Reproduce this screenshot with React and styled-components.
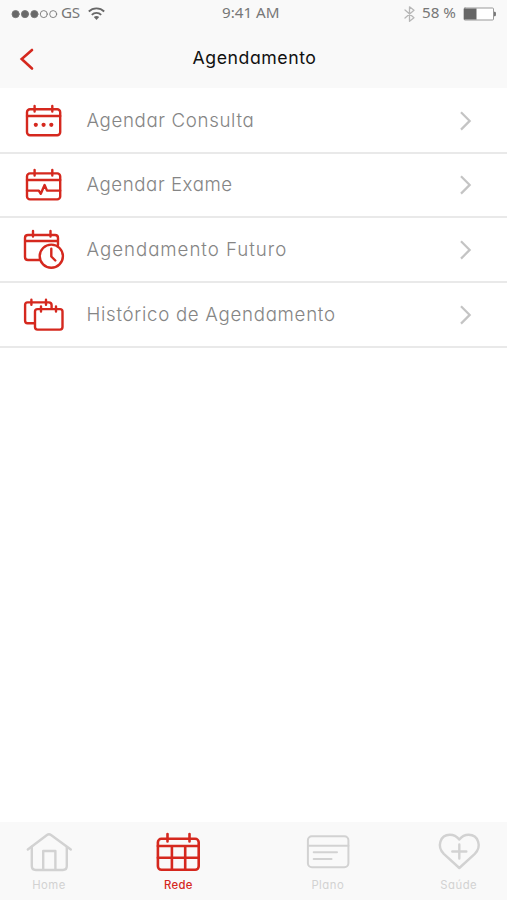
import React from 'react';
import styled, { createGlobalStyle } from 'styled-components';

const RED = '#d5281e';

const GlobalStyle = createGlobalStyle`
  * { box-sizing: border-box; }
  body { margin: 0; background: #fff; }
`;

const Screen = styled.div`
  width: 507px;
  height: 900px;
  display: flex;
  flex-direction: column;
  background: #fff;
  overflow: hidden;
  font-family: Inter, "Noto Sans", sans-serif;
  font-feature-settings: "cv11" 1;
`;

const Header = styled.header`
  height: 88px;
  flex: none;
  background: #f9f9f9;
`;

const StatusBar = styled.div`
  height: 27px;
  padding: 0 10px 0 11px;
  display: grid;
  grid-template-columns: 211px 1fr auto;
  align-items: center;
  font-family: "Noto Sans", sans-serif;
  font-size: 15.2px;
  line-height: 24px;
  color: #777;
`;

const StatusGroup = styled.div`
  display: flex;
  align-items: center;
  gap: ${(p) => p.$gap || 4}px;
`;

const StatusText = styled.span`
  padding-bottom: 3px;
  letter-spacing: ${(p) => p.$spacing || 0}px;
  white-space: nowrap;
`;

const NavBar = styled.div`
  height: 61px;
  padding: 0 16px;
  display: grid;
  grid-template-columns: 40px 1fr 38px;
  align-items: center;
`;

const BackButton = styled.button`
  border: 0;
  padding: 0;
  width: 24px;
  height: 32px;
  background: none;
  display: flex;
`;

const Title = styled.h1`
  margin: 0;
  padding-top: 1px;
  text-align: center;
  font-size: 17.7px;
  font-weight: 400;
  line-height: 24px;
  letter-spacing: 0.55px;
  color: #111;
`;

const Menu = styled.main`
  flex: 1;
  padding-top: 0.8px;
`;

const Row = styled.div`
  height: 64.75px;
  padding: 1px 32px 0 20px;
  display: grid;
  grid-template-columns: 66.5px 1fr 20px;
  align-items: center;
  border-bottom: 2px solid #e9e9e9;
`;

const RowLabel = styled.span`
  font-size: 18.7px;
  font-weight: 300;
  line-height: 26px;
  letter-spacing: ${(p) => p.$spacing}px;
  white-space: nowrap;
  color: #858585;
`;

const Icon = styled.svg`
  display: block;
  flex: none;
  overflow: visible;
  fill: none;
  stroke: ${(p) => p.$color || RED};
  stroke-width: ${(p) => p.$weight || 2.4};
  stroke-linecap: round;
  stroke-linejoin: round;
`;

const TabBar = styled.nav`
  height: 78px;
  flex: none;
  padding: 7px 0 0 25px;
  display: grid;
  grid-template-columns: 129.3px 149.5px 131px 48px;
  background: #f9f9f9;
`;

const Tab = styled.div`
  width: 48px;
  display: flex;
  flex-direction: column;
  align-items: center;
  color: ${(p) => (p.$active ? RED : '#d2d2d2')};
`;

const TabLabel = styled.span`
  margin-top: 4px;
  font-size: 11.3px;
  font-weight: ${(p) => (p.$active ? 500 : 400)};
  line-height: 16px;
  letter-spacing: ${(p) => p.$spacing}px;
  white-space: nowrap;
`;

const SignalDots = () => (
  <Icon width="46" height="12" viewBox="0 0 46 12" $color="#777" $weight={0.9}>
    {[0, 1, 2, 3, 4].map((i) => (
      <circle key={i} cx={4.6 + i * 9.4} cy="6.1" r={i < 3 ? 3.6 : 3.5} fill={i < 3 ? '#686868' : 'none'} />
    ))}
  </Icon>
);

const Wifi = () => (
  <Icon width="17" height="14" viewBox="0 0 17 14" $color="#686868" $weight={1.8}>
    <path d="M.8 4.5C5 .3 12 .3 16.2 4.5M3.8 7.8C6.4 5.2 10.6 5.2 13.2 7.8" strokeLinecap="butt" />
    <path d="M5.8 10.1Q8.5 7.9 11.2 10.1L8.5 13Z" fill="#686868" stroke="none" />
  </Icon>
);

const Bluetooth = () => (
  <Icon width="11" height="16" viewBox="0 0 11 16" $color="#b7b7b7" $weight={1.3}>
    <path d="M1 4L10 11.7L5.5 15.3V.8L10 4.3L1 12" />
  </Icon>
);

const Battery = () => (
  <Icon width="34" height="14" viewBox="0 0 34 14" $color="#999" $weight={1}>
    <rect x="1" y="1" width="29.5" height="12" rx="1" fill="#fff" />
    <rect x="1" y="1.5" width="12.5" height="11" fill="#666" stroke="none" />
    <path d="M31 4.8h1q1 0 1 2.2t-1 2.2h-1z" fill="#777" stroke="none" />
  </Icon>
);

const CalendarDots = () => (
  <Icon width="48" height="48" viewBox="0 0 48 48">
    <rect x="7" y="12.2" width="33.2" height="26" rx="3" />
    <path d="M7 19H40.2M14.6 9v5.5M32.3 9v5.5" />
    <g fill={RED} stroke="none">
      <circle cx="15.8" cy="27.8" r="2.1" />
      <circle cx="23.6" cy="27.8" r="2.1" />
      <circle cx="31.3" cy="27.8" r="2.1" />
    </g>
  </Icon>
);

const CalendarPulse = () => (
  <Icon width="48" height="48" viewBox="0 0 48 48">
    <rect x="7" y="12.4" width="33.2" height="26" rx="3" />
    <path d="M7 19H40.2M14.6 9v5.5M32.3 9v5.5M7 29.6H18.8L20.8 32.8L24.6 24L27 29.6H40.2" />
  </Icon>
);

const CalendarClock = () => (
  <Icon width="48" height="48" viewBox="0 0 48 48">
    <path d="M19 34H8q-3 0-3-3V12q0-3 3-3h27q3 0 3 3v7M5 15H38M13 5v5.5M30.5 5v5.5" />
    <circle cx="31.3" cy="30.2" r="11.6" />
    <path d="M31.3 22.7v7.8l4 4" />
  </Icon>
);

const CalendarStack = () => (
  <Icon width="48" height="48" viewBox="0 0 48 48">
    <path d="M14.8 32.2H7.5q-2.4 0-2.4-2.4v-16q0-2.4 2.4-2.4h21.3q2.8 0 2.8 2.8V17M11.4 8.8v5M26 8.8v5" />
    <rect x="15" y="18.1" width="27.5" height="20.5" rx="2.5" />
    <path d="M21 15.5v5M36 15.5v5" />
  </Icon>
);

const Chevron = () => (
  <Icon width="20" height="24" viewBox="0 0 20 24" $color="#c4c4c4" $weight={2.2}>
    <path d="M6 3.2L14.7 11.9L6 20.6" strokeLinecap="butt" strokeLinejoin="miter" />
  </Icon>
);

const HomeIcon = () => (
  <Icon width="48" height="44" viewBox="0 0 48 44" $color="currentColor">
    <path d="M2.8 20.5L22 6Q24 4.5 26 6L45.8 20.5" />
    <path d="M6.8 18v19q0 4 4 4h27q4 0 4-4V18M18.2 41V22H30.4v19" />
  </Icon>
);

const CalendarGrid = () => (
  <Icon width="48" height="44" viewBox="0 0 48 44" $color="currentColor" $weight={2.6}>
    <rect x="3.9" y="9.8" width="40.8" height="31" rx="3.5" />
    <path d="M3.9 17H44.7M3.9 28.8H44.7M17.9 17V40.8M31.2 17V40.8M13.5 5v7.5M35.5 5v7.5" />
  </Icon>
);

const CardIcon = () => (
  <Icon width="48" height="44" viewBox="0 0 48 44" $color="currentColor" $weight={2}>
    <rect x="3.9" y="7.2" width="40.5" height="31" rx="4" />
    <path d="M4 16.7H44.4M9.7 23.2H33M9.7 30H27.5" />
  </Icon>
);

const HeartPlus = () => (
  <Icon width="48" height="44" viewBox="0 0 48 44" $color="currentColor">
    <path d="M24.3 39L8.8 24.8C1.6 17.8 5 5.8 14.8 5.8Q20.5 5.8 24.3 10.6Q28 5.8 33.7 5.8C43.5 5.8 47 17.8 39.8 24.8Z" />
    <path d="M24.3 15.5V29.5M17.3 22.5H31.3" />
  </Icon>
);

const rows = [
  { label: 'Agendar Consulta', icon: CalendarDots, spacing: 0.63 },
  { label: 'Agendar Exame', icon: CalendarPulse, spacing: 0.55 },
  { label: 'Agendamento Futuro', icon: CalendarClock, spacing: 0.96 },
  { label: 'Histórico de Agendamento', icon: CalendarStack, spacing: 0.7 },
];

const tabs = [
  { label: 'Home', icon: HomeIcon, spacing: 0.5 },
  { label: 'Rede', icon: CalendarGrid, spacing: 0.3, active: true },
  { label: 'Plano', icon: CardIcon, spacing: 0.5 },
  { label: 'Saúde', icon: HeartPlus, spacing: 0.5 },
];

export default function App() {
  return (
    <Screen>
      <GlobalStyle />
      <Header>
        <StatusBar>
          <StatusGroup $gap={8}>
            <StatusGroup>
              <SignalDots />
              <StatusText $spacing={-0.3}>GS</StatusText>
            </StatusGroup>
            <Wifi />
          </StatusGroup>
          <StatusText>9:41 AM</StatusText>
          <StatusGroup $gap={7}>
            <Bluetooth />
            <StatusText>58 %</StatusText>
            <Battery />
          </StatusGroup>
        </StatusBar>
        <NavBar>
          <BackButton aria-label="Voltar">
            <Icon width="24" height="32" viewBox="0 0 24 32" $weight={2.6}>
              <path d="M16 8L5.7 17L16 26.5" strokeLinejoin="miter" />
            </Icon>
          </BackButton>
          <Title>Agendamento</Title>
        </NavBar>
      </Header>
      <Menu>
        {rows.map(({ label, icon: RowIcon, spacing }) => (
          <Row key={label}>
            <RowIcon />
            <RowLabel $spacing={spacing}>{label}</RowLabel>
            <Chevron />
          </Row>
        ))}
      </Menu>
      <TabBar>
        {tabs.map(({ label, icon: TabIcon, spacing, active }) => (
          <Tab key={label} $active={active}>
            <TabIcon />
            <TabLabel $active={active} $spacing={spacing}>{label}</TabLabel>
          </Tab>
        ))}
      </TabBar>
    </Screen>
  );
}
